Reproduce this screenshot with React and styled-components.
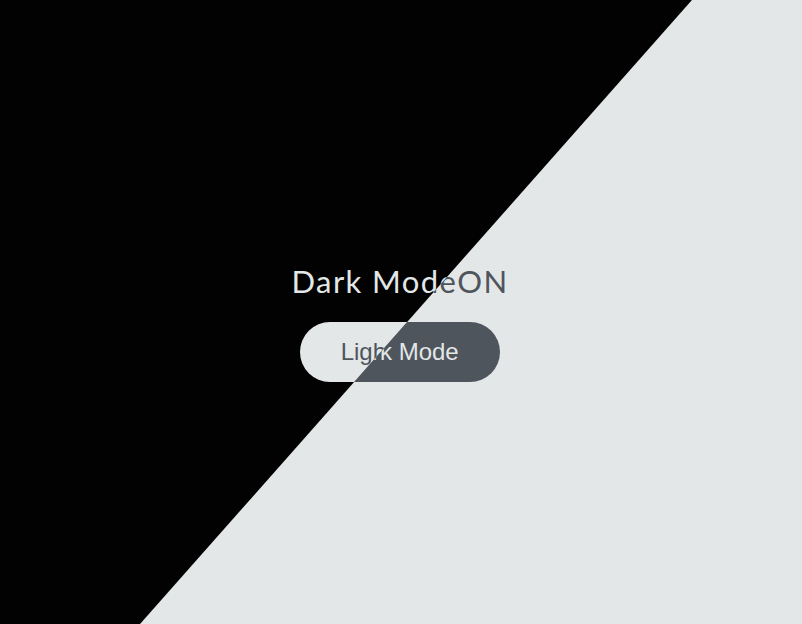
import React from 'react';
import styled, { createGlobalStyle } from 'styled-components';

const GlobalStyle = createGlobalStyle`
    html, body {
        margin: 0;
        padding: 0;
        width: 100%;
        height: 100%;
        overflow: hidden;
    }
    #root {
        height: 100%;
    }
`

const Stage = styled.div`
    position: relative;
    width: 100vw;
    height: 100vh;
    background-color: #e3e7e8;
    overflow: hidden;
`

const Layer = styled.div`
    position: absolute;
    inset: 0;
    display: flex;
    flex-direction: column;
    align-items: center;
    padding-top: 261px;
    padding-right: 2px;
    box-sizing: border-box;
    background-color: ${props => props.dark ? '#010201' : '#e3e7e8'};
    clip-path: ${props => props.dark ? 'polygon(0 0, 86.28% 0, 17.46% 100%, 0 100%)' : 'none'};
`

const Title = styled.h1`
    margin: 0;
    font-family: Lato, "Open Sans", sans-serif;
    font-weight: 400;
    font-size: 31px;
    letter-spacing: 1.4px;
    line-height: 40px;
    color: ${props => props.dark ? '#e3e7e8' : '#4f555c'};
`

const ModeButton = styled.button`
    margin-top: 21px;
    width: 200px;
    height: 60px;
    border: none;
    border-radius: 30px;
    font-family: "Liberation Sans", Arial, sans-serif;
    font-size: 24px;
    background-color: ${props => props.dark ? '#e3e7e8' : '#4f555c'};
    color: ${props => props.dark ? '#4f555c' : '#e3e7e8'};
    cursor: pointer;
`

function Scene({ dark }) {
    return (
        <Layer dark={dark ? 1 : 0}>
            <Title dark={dark ? 1 : 0}>Dark Mode<span>ON</span></Title>
            <ModeButton dark={dark ? 1 : 0}>{dark ? 'Light Mode' : 'Dark Mode'}</ModeButton>
        </Layer>
    )
}

export default function App() {
    return (
        <>
            <GlobalStyle />
            <Stage>
                <Scene />
                <Scene dark />
            </Stage>
        </>
    )
}
